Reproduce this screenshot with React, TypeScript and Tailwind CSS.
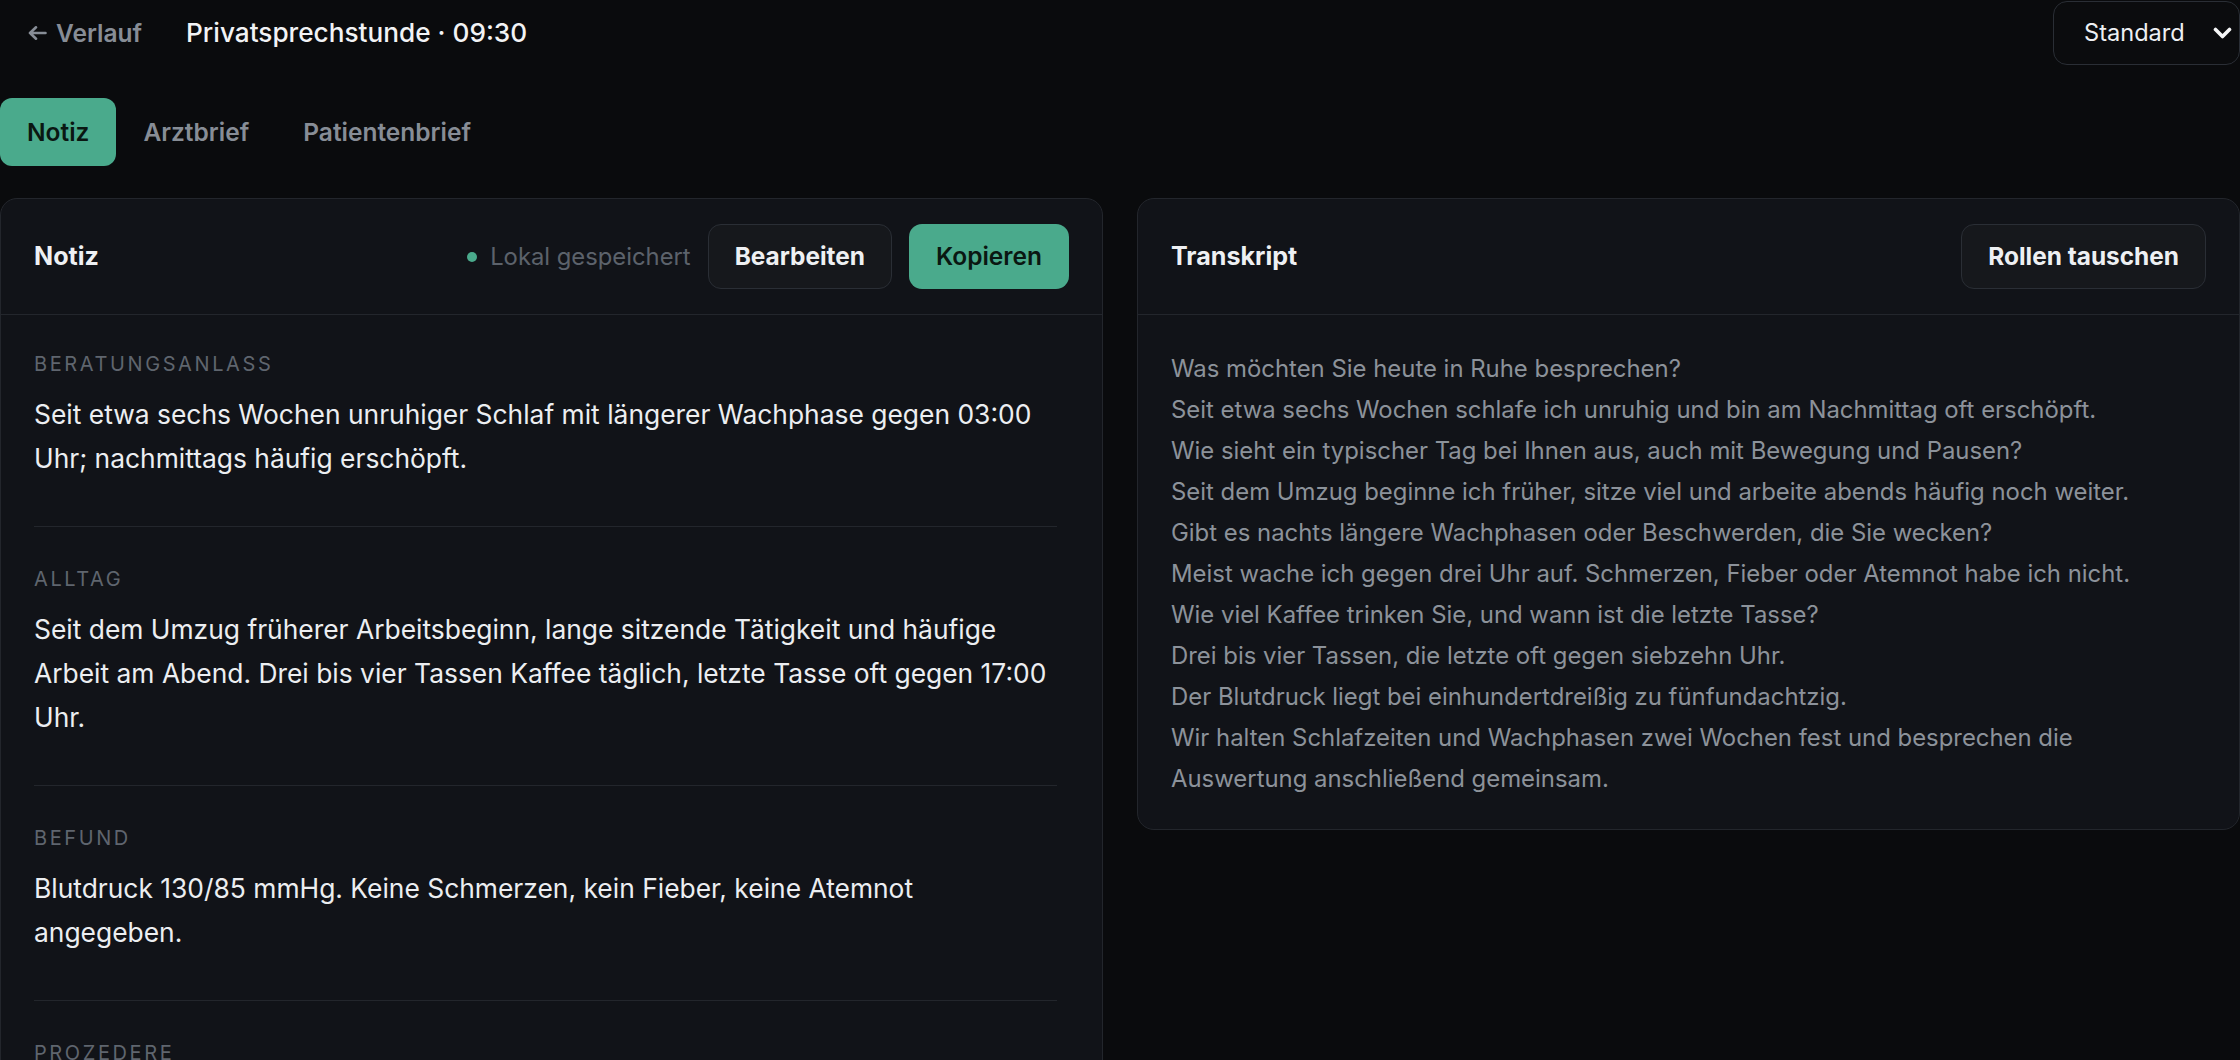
const sections = [
  {
    label: "Beratungsanlass",
    text: "Seit etwa sechs Wochen unruhiger Schlaf mit längerer Wachphase gegen 03:00 Uhr; nachmittags häufig erschöpft.",
  },
  {
    label: "Alltag",
    text: "Seit dem Umzug früherer Arbeitsbeginn, lange sitzende Tätigkeit und häufige Arbeit am Abend. Drei bis vier Tassen Kaffee täglich, letzte Tasse oft gegen 17:00 Uhr.",
  },
  {
    label: "Befund",
    text: "Blutdruck 130/85 mmHg. Keine Schmerzen, kein Fieber, keine Atemnot angegeben.",
  },
  {
    label: "Prozedere",
    text: "Schlaf- und Aktivitätsprotokoll über zwei Wochen, danach gemeinsame Auswertung im Termin.",
  },
];

const transcript = [
  "Was möchten Sie heute in Ruhe besprechen?",
  "Seit etwa sechs Wochen schlafe ich unruhig und bin am Nachmittag oft erschöpft.",
  "Wie sieht ein typischer Tag bei Ihnen aus, auch mit Bewegung und Pausen?",
  "Seit dem Umzug beginne ich früher, sitze viel und arbeite abends häufig noch weiter.",
  "Gibt es nachts längere Wachphasen oder Beschwerden, die Sie wecken?",
  "Meist wache ich gegen drei Uhr auf. Schmerzen, Fieber oder Atemnot habe ich nicht.",
  "Wie viel Kaffee trinken Sie, und wann ist die letzte Tasse?",
  "Drei bis vier Tassen, die letzte oft gegen siebzehn Uhr.",
  "Der Blutdruck liegt bei einhundertdreißig zu fünfundachtzig.",
  "Wir halten Schlafzeiten und Wachphasen zwei Wochen fest und besprechen die Auswertung anschließend gemeinsam.",
];

const tabs = ["Notiz", "Arztbrief", "Patientenbrief"];

function GhostButton({ children }: { children: React.ReactNode }) {
  return (
    <button
      type="button"
      className="h-[65px] rounded-[13px] border border-[#2a2e35] bg-[#16181c] px-[26px] text-[24.4px] font-bold text-[#eef0f3]"
    >
      {children}
    </button>
  );
}

export default function App() {
  return (
    <div className="h-[1060px] overflow-hidden bg-[#0a0b0d] font-['Inter',sans-serif] text-[#eef0f3]">
      <header className="flex h-[66px] items-center justify-between pl-[28px]">
        <div className="flex items-center gap-[44px]">
          <a href="#" className="flex items-center gap-[9px] text-[24.5px] font-semibold text-[#878d96]">
            <svg width="19" height="14" viewBox="0 0 19 14" fill="none" className="mt-[1px]">
              <path d="M17.5 7H2M8 1.3 2 7l6 5.7" stroke="currentColor" strokeWidth="2.6" strokeLinecap="round" strokeLinejoin="round" />
            </svg>
            Verlauf
          </a>
          <h1 className="text-[26.2px] font-medium text-[#f2f3f5]">Privatsprechstunde · 09:30</h1>
        </div>
        <div className="flex h-[64px] w-[187px] items-center justify-between rounded-[14px] border border-[#2a2e35] bg-[#0b0c0e] pl-[30px] pr-[7px] text-[23.6px] text-[#eef0f3]">
          <span>Standard</span>
          <svg width="19" height="12" viewBox="0 0 19 12" fill="none">
            <polyline points="2.5,2.5 9.5,9.5 16.5,2.5" stroke="#f5f6f7" strokeWidth="3.6" strokeLinecap="round" strokeLinejoin="round" />
          </svg>
        </div>
      </header>

      <nav className="mt-[32px] flex">
        {tabs.map((t, i) => (
          <button
            key={t}
            type="button"
            className={
              i === 0
                ? "h-[68px] rounded-[12px] bg-[#4aaa8c] px-[27px] text-[24.5px] font-semibold text-[#0a1712]"
                : "h-[68px] rounded-[12px] px-[27px] text-[24.5px] font-semibold text-[#878d96]"
            }
          >
            {t}
          </button>
        ))}
      </nav>

      <main className="mt-[32px] grid grid-cols-2 items-start gap-[34px]">
        <section className="rounded-[17px] border border-[#23262c] bg-[#111318]">
          <div className="flex h-[116px] items-center justify-between border-b border-[#23262c] px-[33px]">
            <h2 className="text-[25.1px] font-bold">Notiz</h2>
            <div className="flex items-center gap-[17px]">
              <span className="flex items-center gap-[13px] text-[23.8px] text-[#5c626b]">
                <span className="h-[10px] w-[10px] rounded-full bg-[#4aaa8c]" />
                Lokal gespeichert
              </span>
              <GhostButton>Bearbeiten</GhostButton>
              <button
                type="button"
                className="h-[65px] rounded-[13px] bg-[#4aaa8c] px-[27px] text-[24.5px] font-semibold text-[#0a1712]"
              >
                Kopieren
              </button>
            </div>
          </div>
          <div className="pl-[33px] pr-[45px]">
            {sections.map((s, i) => (
              <div
                key={s.label}
                className={
                  i === 0
                    ? "border-b border-[#23262c] pt-[35px] pb-[46px]"
                    : "border-b border-[#23262c] pt-[38px] pb-[46px]"
                }
              >
                <div className="text-[20px] leading-[28px] uppercase tracking-[0.13em] text-[#5f656e]">{s.label}</div>
                <p className="mt-[14px] text-[26.4px] leading-[44px] text-[#eceef1]">{s.text}</p>
              </div>
            ))}
          </div>
        </section>

        <section className="rounded-[17px] border border-[#23262c] bg-[#111318]">
          <div className="flex h-[116px] items-center justify-between border-b border-[#23262c] px-[33px]">
            <h2 className="text-[25.1px] font-bold">Transkript</h2>
            <GhostButton>Rollen tauschen</GhostButton>
          </div>
          <div className="px-[33px] pt-[33px] pb-[30px]">
            {transcript.map((line) => (
              <p key={line} className="text-[23.9px] leading-[41px] text-[#8c929a]">
                {line}
              </p>
            ))}
          </div>
        </section>
      </main>
    </div>
  );
}
